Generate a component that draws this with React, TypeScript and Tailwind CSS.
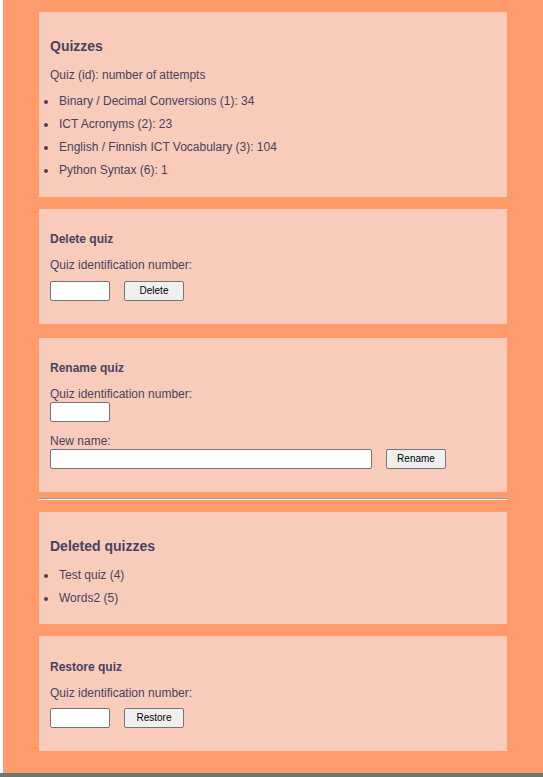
const text = "text-[#48425e]";

function Card({ children, className = "" }: { children: React.ReactNode; className?: string }) {
  return <section className={`w-[468px] bg-[#f9cbbb] pl-[11px] pr-3 flex flex-col ${className}`}>{children}</section>;
}

function IdInput() {
  return <input type="text" className="w-[60px] h-5 bg-white border border-[#767676] rounded-[2px]" />;
}

function Btn({ label }: { label: string }) {
  return (
    <button className="w-[60px] h-5 bg-[#efefef] border border-[#767676] rounded-[2px] text-[10px] text-black leading-none">
      {label}
    </button>
  );
}

function Bullets({ items, first }: { items: string[]; first: string }) {
  return (
    <ul className={`list-disc pl-2 ${first} flex flex-col gap-[9px]`}>
      {items.map((it) => (
        <li key={it} className="leading-[14px] pl-[1px]">{it}</li>
      ))}
    </ul>
  );
}

export default function App() {
  return (
    <div className={`min-h-[777px] flex flex-col bg-white ${text} text-[12px]`} style={{ fontFamily: '"Liberation Sans", Arial, sans-serif' }}>
      <div className="flex">
        <div className="w-[3px] bg-white" />
        <main className="flex-1 bg-[#ff9b6b] flex flex-col items-center pt-3 pb-[22px]">
          <Card className="pt-[26px] pb-5">
            <h3 className="text-[14px] font-bold leading-4">Quizzes</h3>
            <p className="mt-[14px] leading-[14px]">Quiz (id): number of attempts</p>
            <Bullets
              first="mt-3"
              items={[
                "Binary / Decimal Conversions (1): 34",
                "ICT Acronyms (2): 23",
                "English / Finnish ICT Vocabulary (3): 104",
                "Python Syntax (6): 1",
              ]}
            />
          </Card>

          <Card className="mt-3 pt-[23px] pb-[23px]">
            <h4 className="font-bold leading-[14px]">Delete quiz</h4>
            <label className="mt-3 leading-[14px]">Quiz identification number:</label>
            <div className="mt-[9px] flex items-center gap-[14px]">
              <IdInput />
              <Btn label="Delete" />
            </div>
          </Card>

          <Card className="mt-[14px] pt-[23px] pb-[23px]">
            <h4 className="font-bold leading-[14px]">Rename quiz</h4>
            <label className="mt-3 leading-[14px]">Quiz identification number:</label>
            <div className="mt-[1px] flex">
              <IdInput />
            </div>
            <label className="mt-3 leading-[14px]">New name:</label>
            <div className="mt-[1px] flex items-center gap-[14px]">
              <input type="text" className="w-[322px] h-5 bg-white border border-[#767676] rounded-[2px]" />
              <Btn label="Rename" />
            </div>
          </Card>

          <hr className="mt-[6px] w-[468px] h-0 border-t border-b border-t-[#9a9a9a] border-b-[#f4f4f4]" />

          <Card className="mt-3 pt-[26px] pb-[19px]">
            <h3 className="text-[14px] font-bold leading-4">Deleted quizzes</h3>
            <Bullets first="mt-[14px]" items={["Test quiz (4)", "Words2 (5)"]} />
          </Card>

          <Card className="mt-3 pt-6 pb-[23px]">
            <h4 className="font-bold leading-[14px]">Restore quiz</h4>
            <label className="mt-3 leading-[14px]">Quiz identification number:</label>
            <div className="mt-2 flex items-center gap-[14px]">
              <IdInput />
              <Btn label="Restore" />
            </div>
          </Card>
        </main>
      </div>
      <footer className="flex-1 bg-[#687873]" />
    </div>
  );
}
